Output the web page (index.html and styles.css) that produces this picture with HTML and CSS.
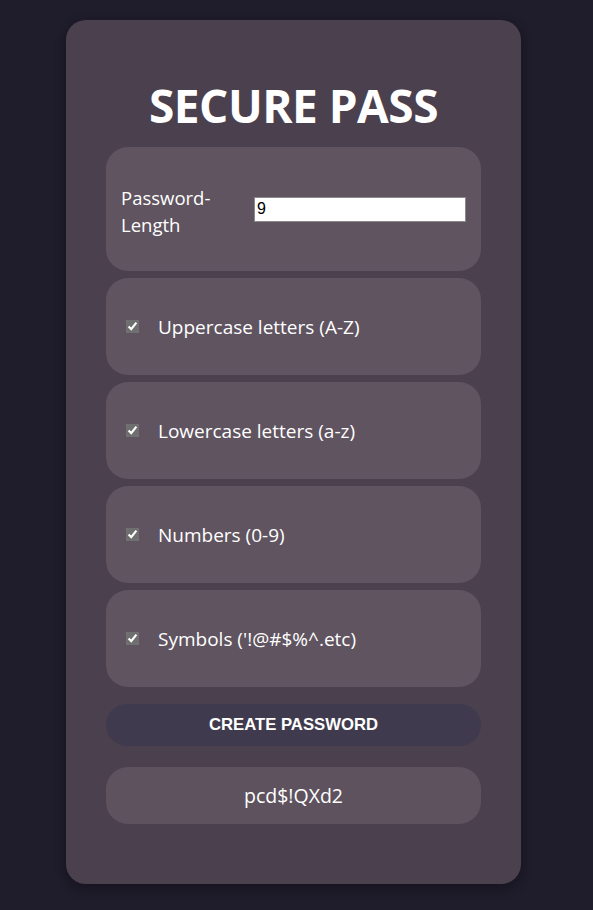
FILE: index.html
```html
<!DOCTYPE html>
<html>
<head>
<meta charset="utf-8">
<link rel="stylesheet" href="styles.css">
</head>
<body>
<div class="card">
  <h1 class="title">SECURE PASS</h1>
  <div class="row length-row">
    <label class="length-label" for="len">Password-<br>Length</label>
    <input class="length-input" id="len" type="text" value="9">
  </div>
  <div class="row option-row">
    <input class="check" type="checkbox" checked>
    <span class="option-text">Uppercase letters (A-Z)</span>
  </div>
  <div class="row option-row">
    <input class="check" type="checkbox" checked>
    <span class="option-text">Lowercase letters (a-z)</span>
  </div>
  <div class="row option-row">
    <input class="check" type="checkbox" checked>
    <span class="option-text">Numbers (0-9)</span>
  </div>
  <div class="row option-row">
    <input class="check" type="checkbox" checked>
    <span class="option-text">Symbols ('!@#$%^.etc)</span>
  </div>
  <button class="create-btn">CREATE PASSWORD</button>
  <div class="output">pcd$!QXd2</div>
</div>
</body>
</html>
```
FILE: styles.css
```css
html, body {
  margin: 0;
  padding: 0;
}
body {
  background: #1f1c2b;
  font-family: "Open Sans", "Noto Sans", sans-serif;
  color: #ffffff;
  padding-top: 20px;
  height: 910px;
  box-sizing: border-box;
}
.card {
  width: 455px;
  height: 864px;
  box-sizing: border-box;
  margin-left: 66px;
  background: #4b404e;
  border-radius: 20px;
  padding: 58px 40px 0 40px;
  display: flex;
  flex-direction: column;
  box-shadow: 0 4px 12px rgba(0,0,0,0.3);
}
.title {
  margin: 0 0 15px 0;
  text-align: center;
  font-size: 46px;
  font-weight: 700;
  line-height: 54px;
  letter-spacing: -0.5px;
}
.row {
  background: #5f5460;
  border-radius: 22px;
  display: flex;
  align-items: center;
  box-sizing: border-box;
  margin-bottom: 7px;
}
.length-row {
  height: 124px;
  padding: 0 15px;
}
.length-label {
  font-size: 18.5px;
  line-height: 27px;
  width: 133px;
  margin-top: 3px;
}
.length-input {
  width: 212px;
  height: 25px;
  box-sizing: border-box;
  border: 1px solid #8a8a8a;
  background: #fff;
  padding: 0 2px;
  font-family: "Liberation Sans", Arial, sans-serif;
  font-size: 16px;
  color: #000;
  outline: none;
}
.option-row {
  height: 97px;
  padding: 0 20px;
}
.check {
  width: 13px;
  height: 13px;
  margin: 0 19px 0 0;
  accent-color: #6f6f6f;
}
.option-text {
  font-size: 19px;
}
.create-btn {
  margin-top: 10px;
  height: 42px;
  border: none;
  border-radius: 21px;
  background: #3f3a4e;
  color: #fff;
  font-family: "Liberation Sans", Arial, sans-serif;
  font-weight: 700;
  font-size: 16.7px;
}
.output {
  margin-top: 21px;
  height: 57px;
  border-radius: 22px;
  background: #5e525e;
  display: flex;
  align-items: center;
  justify-content: center;
  font-size: 19.5px;
}
```
